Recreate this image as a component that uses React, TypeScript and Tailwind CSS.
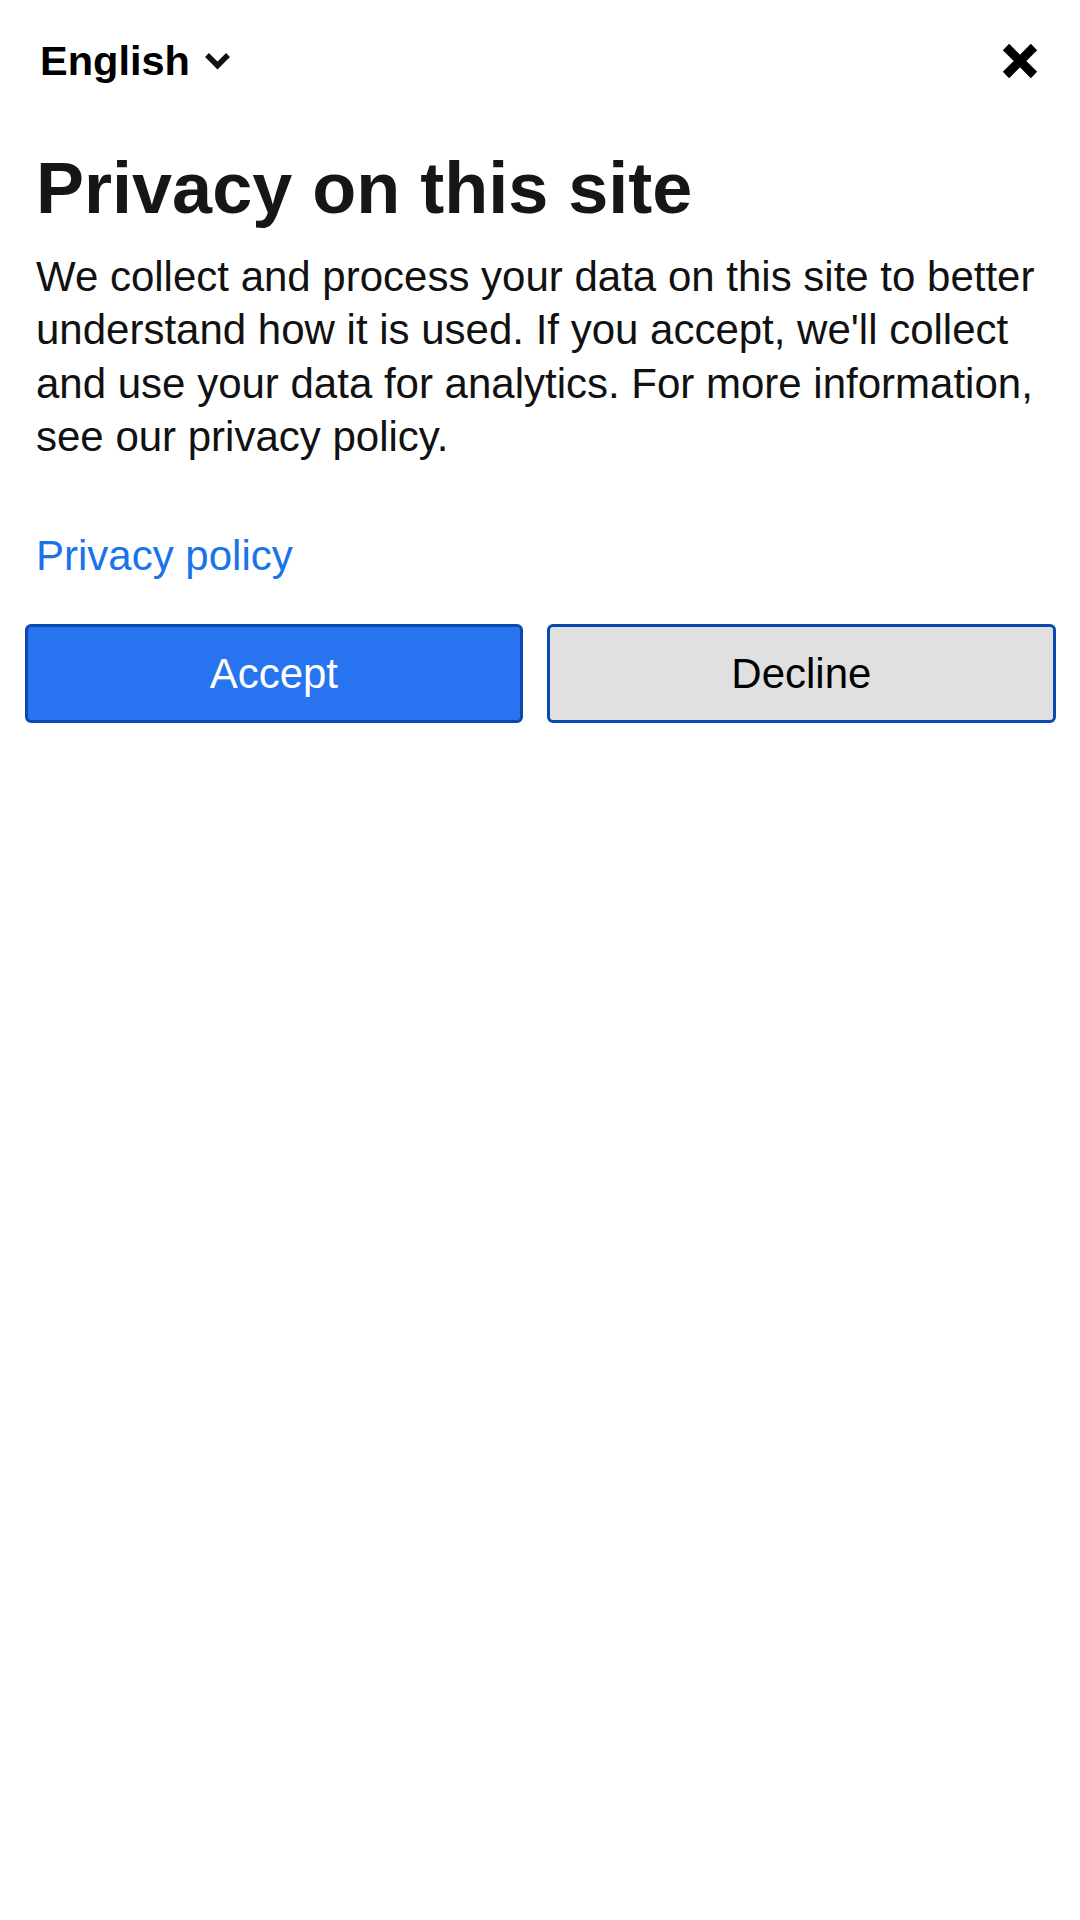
import { useState } from "react";

export default function App() {
  const [lang] = useState("English");

  return (
    <div className="min-h-[1920px] w-[1080px] bg-white font-['Liberation_Sans',Arial,sans-serif]">
      <header className="flex items-center justify-between pl-[40px] pr-[42px] pt-[41px]">
        <button className="flex items-center gap-[14px] text-[41.5px] font-bold leading-[40px] text-black">
          <span>{lang}</span>
          <svg width="27" height="20" viewBox="0 0 27 20" aria-hidden="true">
            <path d="M3 4l10.5 10.5L24 4" fill="none" stroke="#111" strokeWidth="5.5" />
          </svg>
        </button>
        <button aria-label="Close">
          <svg width="36" height="36" viewBox="0 0 36 36" aria-hidden="true">
            <path d="M4 4l28 28M32 4L4 32" stroke="#000" strokeWidth="9" />
          </svg>
        </button>
      </header>

      <main className="px-9">
        <h1 className="mt-[71px] text-[72px] font-bold leading-[72px] text-[#161616]">
          Privacy on this site
        </h1>
        <p className="mt-[26px] text-[42px] leading-[53.3px] text-[#111]">
          We collect and process your data on this site to better understand how it is used. If
          you accept, we'll collect and use your data for analytics. For more information, see our
          privacy policy.
        </p>
        <a href="#" className="mt-[66px] block text-[42px] leading-[53.3px] text-[#1a73e8]">
          Privacy policy
        </a>
      </main>

      <div className="mt-[42px] flex gap-6 pl-[25px] pr-[24px]">
        <button className="h-[99px] flex-auto rounded-[6px] border-[3px] border-[#0b4aad] bg-[#2874f0] text-[42px] text-white">
          Accept
        </button>
        <button className="h-[99px] flex-auto rounded-[6px] border-[3px] border-[#0b4aad] bg-[#e0e0e0] text-[42px] text-black">
          Decline
        </button>
      </div>
    </div>
  );
}
